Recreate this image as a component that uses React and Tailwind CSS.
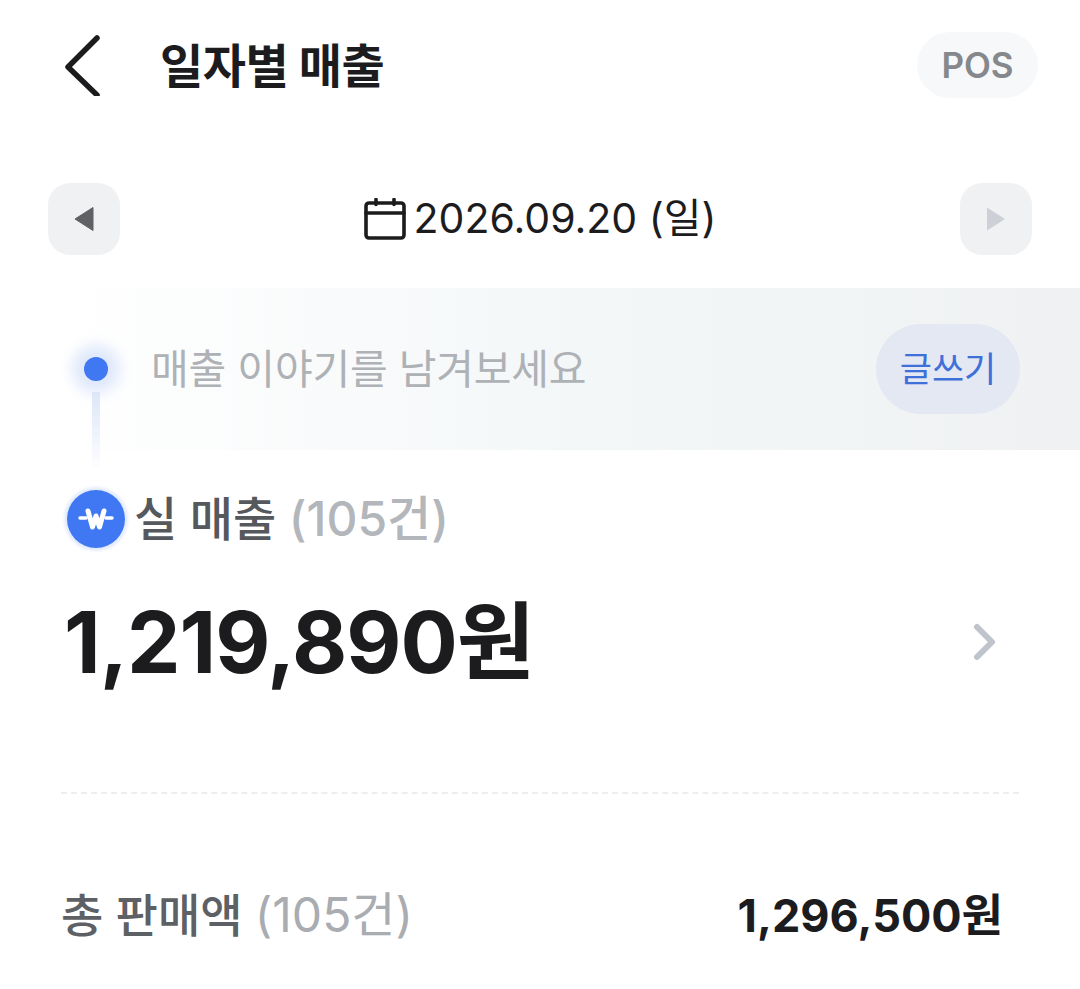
const FONT = "font-['Inter','Noto_Sans_CJK_KR',sans-serif]";

function WonBadge() {
  return (
    <div className="flex h-[58px] w-[58px] shrink-0 items-center justify-center rounded-full bg-[#3f78f2] shadow-[0_0_3px_3px_#e3ebfb]">
      <svg width="36" height="26" viewBox="0 0 36 26" fill="none" stroke="#fff" strokeLinecap="round" strokeLinejoin="round">
        <path d="M10 5l4.5 16L18 10l3.5 11L26 5" strokeWidth="5" />
        <path d="M2 12h6M28 12h6" strokeWidth="3.5" />
      </svg>
    </div>
  );
}

export default function App() {
  return (
    <div className={`h-[989px] w-[1080px] overflow-hidden bg-white ${FONT}`}>
      {/* Header */}
      <div className="flex h-[98px] items-center pt-[32px] pl-[64px] pr-[42px]">
        <svg width="38" height="62" viewBox="0 0 38 62" fill="none" stroke="#1c1c1e" strokeWidth="5.5" strokeLinecap="round" strokeLinejoin="round" className="-mt-[1px]">
          <path d="M33 4L4 33l29 28" />
        </svg>
        <h1 className="ml-[58px] flex-1 text-[47px] leading-none font-bold tracking-[-0.5px] text-[#1c1c1e]">일자별 매출</h1>
        <div className="flex h-[66px] w-[121px] items-center justify-center rounded-full bg-[#f7f8f9] text-[35px] font-semibold text-[#85888c]">POS</div>
      </div>

      {/* Date nav */}
      <div className="mt-[84px] flex h-[73px] items-center justify-between pl-[48px] pr-[48px]">
        <div className="flex h-[72px] w-[72px] items-center justify-center rounded-[22px] bg-[#f0f1f3]">
          <svg width="20" height="26" viewBox="0 0 20 26"><path d="M19 1.5v23L1 13z" fill="#5f6164" stroke="#5f6164" strokeLinejoin="round" /></svg>
        </div>
        <div className="flex items-center gap-[8px] text-[41px] leading-none text-[#1c1c1e]">
          <svg width="42" height="42" viewBox="0 0 42 42" fill="none" stroke="#1c1c1e" strokeWidth="3.6" strokeLinecap="round" strokeLinejoin="round">
            <rect x="2" y="5" width="38" height="35" rx="3" />
            <path d="M2 15h38M12 1.5v5M30 1.5v5" />
          </svg>
          <span>2026.09.20 (일)</span>
        </div>
        <div className="flex h-[72px] w-[72px] items-center justify-center rounded-[22px] bg-[#f0f1f3]">
          <svg width="20" height="26" viewBox="0 0 20 26"><path d="M1 1.5v23L19 13z" fill="#cdd0d6" /></svg>
        </div>
      </div>

      {/* Story row */}
      <div className="relative mt-[33px] ml-[48px] flex h-[162px] items-center bg-gradient-to-r from-white via-[#f4f7f8] to-[#eff1f3] pl-[103px] pr-[60px]">
        <div className="absolute top-[69px] left-[36px] h-[24px] w-[24px] rounded-full bg-[#3f78f2] shadow-[0_0_14px_12px_#dfe8fb]" />
        <div className="absolute top-[104px] left-[44px] h-[80px] w-[8px] bg-gradient-to-b from-[#dde6f8] to-white" />
        <span className="flex-1 text-[41px] leading-none tracking-[-0.2px] text-[#aeb1b5]">매출 이야기를 남겨보세요</span>
        <div className="flex h-[90px] w-[144px] items-center justify-center rounded-full bg-[#e3e8f2] text-[35px] text-[#3f70da]">글쓰기</div>
      </div>

      {/* Net sales */}
      <div className="mt-[39px] flex h-[60px] items-center gap-[9px] pl-[67px]">
        <WonBadge />
        <span className="text-[47px] leading-none font-medium text-[#55585c]">실 매출 <span className="text-[48px] text-[#b3b6ba]">(105건)</span></span>
      </div>
      <div className="mt-[48px] flex h-[90px] items-center justify-between pl-[64px] pr-[82px]">
        <span className="text-[85px] leading-none font-bold tracking-[-1px] text-[#1c1c1e]">1,219,890원</span>
        <svg width="26" height="38" viewBox="0 0 26 38" fill="none" stroke="#bec3cc" strokeWidth="6" strokeLinecap="round" strokeLinejoin="round">
          <path d="M5 4l15 15L5 34" />
        </svg>
      </div>

      {/* Divider */}
      <div className="mx-[61px] mt-[105px] border-t-2 border-dashed border-[#eceef0]" />

      {/* Total */}
      <div className="mt-[97px] flex items-center justify-between pl-[61px] pr-[77px]">
        <span className="text-[46px] leading-none font-medium text-[#5d6064]">총 판매액 <span className="text-[48px] font-normal text-[#a9acb0]">(105건)</span></span>
        <span className="text-[45px] leading-none font-bold text-[#1c1c1e]">1,296,500원</span>
      </div>
    </div>
  );
}
